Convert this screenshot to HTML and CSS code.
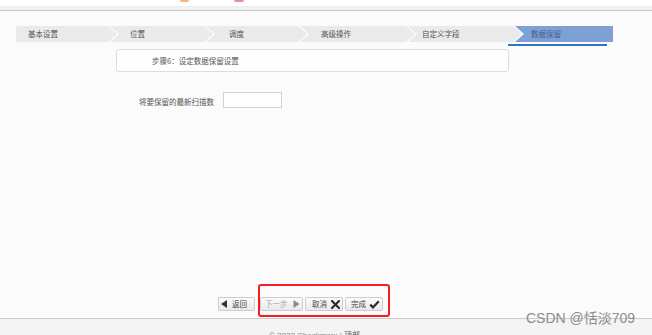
FILE: index.html
```html
<!DOCTYPE html>
<html lang="zh-CN">
<head>
<meta charset="utf-8">
<title>数据保留</title>
<link rel="stylesheet" href="styles.css">
</head>
<body>
<div class="page">
  <header class="topbar">
    <span class="mark mark-orange"></span>
    <span class="mark mark-pink"></span>
  </header>

  <main class="content">
    <ol class="steps">
      <li class="step s1">基本设置</li>
      <li class="step s2">位置</li>
      <li class="step s3">调度</li>
      <li class="step s4">高级操作</li>
      <li class="step s5">自定义字段</li>
      <li class="step s6 active">数据保留</li>
    </ol>
    <div class="active-line"></div>

    <div class="step-title">步骤6：设定数据保留设置</div>

    <div class="field-row">
      <label class="field-label" for="keep">将要保留的最新扫描数</label>
      <input class="field-input" id="keep" type="text">
    </div>
  </main>

  <div class="actions">
    <button class="btn btn-back" type="button">
      <svg class="ico" width="7" height="8" viewBox="0 0 7 8"><polygon points="6,0 6,8 0,4" fill="#333"/></svg>
      <span class="lbl">返回</span>
    </button>
    <button class="btn btn-next disabled" type="button">
      <span class="lbl">下一步</span>
      <svg class="ico" width="7" height="8" viewBox="0 0 7 8"><polygon points="0.5,0 0.5,8 6.5,4" fill="#8a8a8a"/></svg>
    </button>
    <button class="btn btn-cancel" type="button">
      <span class="lbl">取消</span>
      <svg class="ico" width="9" height="9" viewBox="0 0 9 9"><path d="M1 1 L8 8 M8 1 L1 8" stroke="#2a2a2a" stroke-width="2.1" stroke-linecap="square"/></svg>
    </button>
    <button class="btn btn-done" type="button">
      <span class="lbl">完成</span>
      <svg class="ico" width="11" height="9" viewBox="0 0 11 9"><path d="M1.2 4.6 L4 7.4 L9.8 1.2" stroke="#2a2a2a" stroke-width="2.2" fill="none"/></svg>
    </button>
    <div class="highlight"></div>
  </div>

  <footer class="footer">
    <span class="copy">© 2022 Checkmarx | <span class="top-link">顶部</span></span>
  </footer>

  <div class="watermark">CSDN @恬淡709</div>
</div>
</body>
</html>
```

FILE: styles.css
```css
* {
  box-sizing: border-box;
}

html, body {
  margin: 0;
  padding: 0;
}

body {
  width: 652px;
  height: 335px;
  overflow: hidden;
  background: #fbfbfb;
  font-family: "Noto Sans CJK SC", "Noto Sans", sans-serif;
  color: #555;
}

.page {
  position: relative;
  height: 335px;
  display: flex;
  flex-direction: column;
}

/* header */
.topbar {
  height: 11px;
  background: linear-gradient(#ffffff 0, #ffffff 6px, #f0f0f0 6px, #f0f0f0 10px);
  border-bottom: 1px solid #c9c9c9;
  display: flex;
  align-items: flex-start;
  padding-left: 180px;
  gap: 45px;
}

.mark {
  display: block;
  width: 9px;
  height: 2px;
  border-radius: 0 0 3px 3px;
}

.mark-orange {
  background: #f6b27c;
}

.mark-pink {
  background: #e98e91;
  width: 10px;
}

/* content */
.content {
  flex: 1;
  padding-top: 15px;
}

.steps {
  list-style: none;
  margin: 0 0 0 16px;
  padding: 0;
  display: flex;
  height: 16px;
}

.step {
  height: 16px;
  line-height: 16px;
  font-size: 7.5px;
  color: #555;
  background: #eaeaea;
  white-space: nowrap;
  clip-path: polygon(0 0, calc(100% - 9px) 0, 100% 50%, calc(100% - 9px) 100%, 0 100%, 9px 50%);
  margin-left: -7px;
}

.s1 {
  width: 101px;
  padding-left: 12px;
  margin-left: 0;
  clip-path: polygon(0 0, calc(100% - 9px) 0, 100% 50%, calc(100% - 9px) 100%, 0 100%);
}

.s2 { width: 103px; padding-left: 20px; }
.s3 { width: 101px; padding-left: 23px; }
.s4 { width: 115px; padding-left: 21px; }
.s5 { width: 114px; padding-left: 14px; }

.s6 {
  width: 98px;
  padding-left: 16px;
  clip-path: polygon(0 0, 100% 0, 100% 100%, 0 100%, 9px 50%);
}

.step.active {
  background: #7da1d5;
  color: #3f5f8f;
}

.active-line {
  width: 99px;
  height: 2px;
  margin: 2px 0 0 508px;
  background: #2f77b7;
}

.step-title {
  width: 393px;
  height: 23px;
  margin: 3px 0 0 116px;
  padding-left: 35px;
  background: #fefefe;
  border: 1px solid #dcdcdc;
  border-radius: 3px;
  font-size: 7.5px;
  line-height: 21px;
  color: #555;
}

.field-row {
  display: flex;
  align-items: center;
  gap: 9px;
  margin: 20px 0 0 139px;
}

.field-label {
  font-size: 7.5px;
  color: #555;
  position: relative;
  top: 1px;
}

.field-input {
  width: 59px;
  height: 16px;
  margin: 0;
  padding: 0;
  background: #fff;
  border: 1px solid #d3d3d3;
  border-radius: 0;
  outline: none;
}

/* actions */
.actions {
  position: relative;
  height: 34px;
  display: flex;
  align-items: flex-start;
  padding: 13px 0 0 218px;
}

.btn {
  height: 14px;
  margin: 0;
  padding: 0 3px;
  display: inline-flex;
  align-items: center;
  justify-content: space-between;
  gap: 3px;
  background: linear-gradient(#fbfbfb, #e9e9e9);
  border: 1px solid #cdcdcd;
  border-radius: 2px;
  font-family: "Noto Sans CJK SC", sans-serif;
  font-size: 7.5px;
  line-height: 12px;
  color: #444;
  white-space: nowrap;
}

.lbl {
  display: block;
  white-space: nowrap;
}

.ico {
  display: block;
  flex: none;
}

.btn-back {
  width: 37px;
  padding-left: 2px;
  padding-right: 7px;
}

.btn-next {
  width: 43px;
  margin-left: 5px;
  padding-left: 4px;
  padding-right: 2px;
}

.btn.disabled {
  color: #aaa;
}

.btn-cancel {
  width: 38px;
  margin-left: 2px;
  padding-left: 6px;
  padding-right: 2px;
}

.btn-done {
  width: 38px;
  margin-left: 2px;
  padding-left: 5px;
  padding-right: 2px;
}

.highlight {
  position: absolute;
  left: 258px;
  top: 0;
  width: 132px;
  height: 33px;
  border: 2px solid #f21d1d;
  border-radius: 3px;
  pointer-events: none;
}

/* footer */
.footer {
  height: 17px;
  flex: none;
  border-top: 1px solid #cbcbcb;
  background: #f4f4f4;
  width: 652px;
  padding-top: 11px;
}

.copy {
  display: block;
  width: 629px;
  text-align: center;
  font-family: "Liberation Sans", "Noto Sans CJK SC", sans-serif;
  font-size: 8px;
  line-height: 10px;
  color: #8a8a8a;
}

.top-link {
  color: #555;
  font-family: "Noto Sans CJK SC", sans-serif;
}

.watermark {
  position: absolute;
  left: 526px;
  top: 310px;
  font-family: "Liberation Sans", "Noto Sans CJK SC", sans-serif;
  font-size: 14px;
  line-height: 16px;
  color: #8c8c8c;
  white-space: nowrap;
}
```
